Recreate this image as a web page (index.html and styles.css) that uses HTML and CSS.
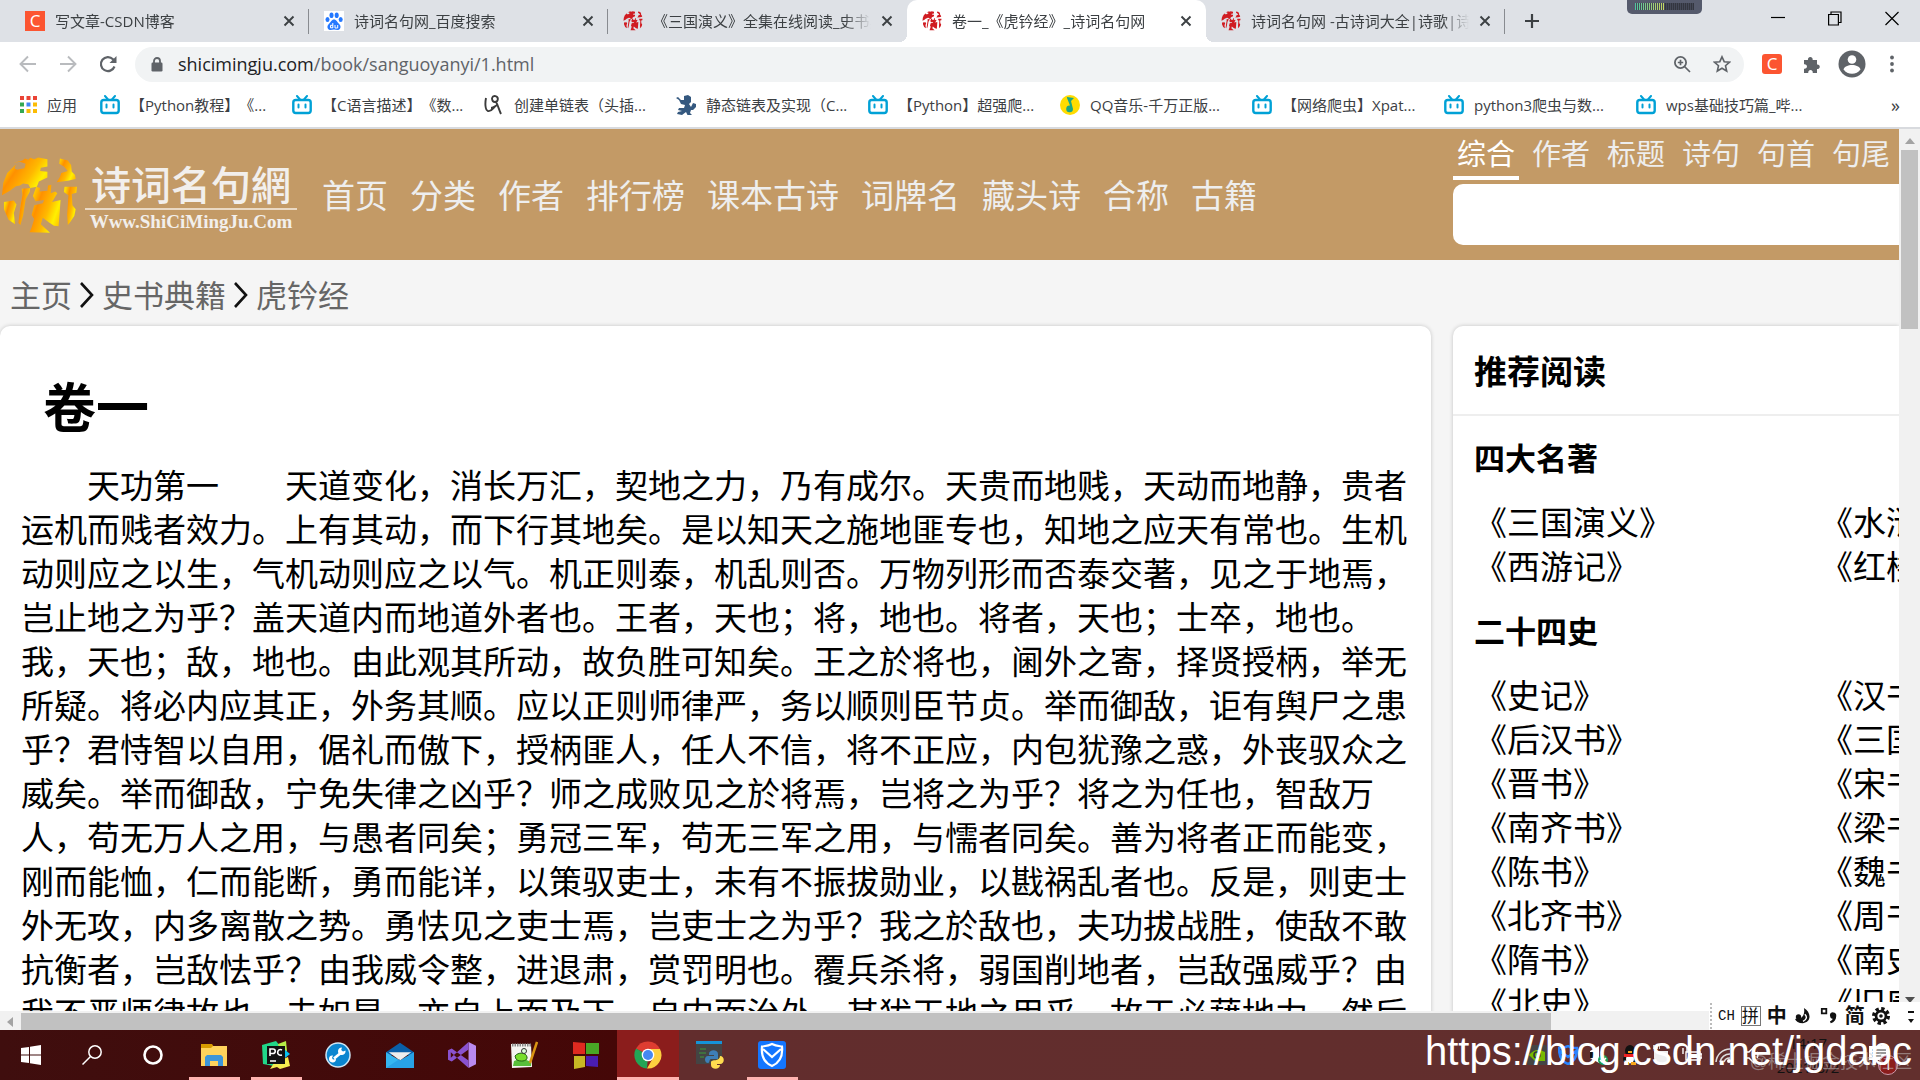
FILE: index.html
```html
<!DOCTYPE html>
<html lang="zh-CN">
<head>
<meta charset="utf-8">
<title>卷一_《虎钤经》_诗词名句网</title>
<link rel="stylesheet" href="styles.css">
</head>
<body>
<svg class="defs" aria-hidden="true">
  <defs>
    <linearGradient id="gold" x1="0" y1="0" x2="0.9" y2="0.5" spreadMethod="reflect">
      <stop offset="0" stop-color="#ffe600"/><stop offset=".15" stop-color="#ffd800"/><stop offset=".42" stop-color="#ff9000"/><stop offset=".75" stop-color="#ffb800"/><stop offset="1" stop-color="#fff000"/>
    </linearGradient>
    <symbol id="seal" viewBox="0 0 240 240">
      <path d="M40 20L68 12L76 6L86 10L92 4L104 8L116 3L144 8V30L124 34L122 44L144 46V64L118 76L112 92L92 96L86 84L70 82L60 88L48 90L30 104L6 118L10 80L22 50L48 24L44 36L52 40L74 36L78 22L60 16Z"/>
      <path d="M182 6L206 12L216 26L218 46L228 56L230 68L206 74L172 78L182 62L186 50L206 44L194 30L180 22Z"/>
      <path d="M12 138L42 134L50 146L42 172L46 206L26 192L12 160Z"/>
      <path d="M66 98L92 96L90 108L78 130L70 180L62 208L56 202L62 150L68 116Z"/>
      <path d="M110 92L122 96L120 106L144 104L146 88L156 86L154 112L168 106L174 112L158 138L184 132L182 162L178 212L164 210L148 200L130 186L124 206L152 232L90 230L96 216L104 190L96 178L104 148L130 142L134 132L108 136L100 120Z"/>
      <path d="M196 92L234 92L232 110L218 114L220 148L230 160L226 180L214 198L206 208L204 176L208 118L194 108Z"/>
    </symbol>
    <symbol id="bili" viewBox="0 0 20 20">
      <path d="M5 1L8 4.500M15 1L12 4.500" stroke="#00a1d6" stroke-width="2" stroke-linecap="round"/>
      <rect x="1.300" y="5" width="17.400" height="13" rx="2.500" fill="#fff" stroke="#00a1d6" stroke-width="2.400"/>
      <path d="M6.500 9.500v3M13.500 9.500v3" stroke="#00a1d6" stroke-width="2" stroke-linecap="round"/>
    </symbol>
    <symbol id="x" viewBox="0 0 12 12"><path d="M1.500 1.500L10.500 10.500M10.500 1.500L1.500 10.500" stroke="#3c4043" stroke-width="1.900"/></symbol>
  </defs>
</svg>

<div class="tabstrip">
  <div class="tab"><span class="fav csdn">C</span><span class="tab-title">写文章-CSDN博客</span><button class="close" aria-label="关闭"><svg><use href="#x"/></svg></button></div>
  <div class="tab"><svg class="fav" viewBox="0 0 20 20"><rect width="20" height="20" fill="#fff"/><g fill="#2478ff"><ellipse cx="3.500" cy="8.500" rx="2" ry="2.600"/><ellipse cx="7.500" cy="4.300" rx="2" ry="2.800"/><ellipse cx="12.700" cy="4.300" rx="2" ry="2.800"/><ellipse cx="16.700" cy="8.500" rx="2" ry="2.600"/><path d="M10 8.500c2.500 0 3 2.500 5.200 4.500 2.400 2.200 1.300 5.700-1.200 6-1.500.1-2.500-.4-4-.4s-2.500.5-4 .4c-2.500-.3-3.600-3.800-1.200-6C7 11 7.500 8.500 10 8.500z"/></g><path d="M8.800 12v5M8.800 14.300H6.500v2.500h2.300M11 14v3h2.700v-3" fill="none" stroke="#fff" stroke-width="1"/></svg><span class="tab-title">诗词名句网_百度搜索</span><button class="close" aria-label="关闭"><svg><use href="#x"/></svg></button></div>
  <div class="tab flush"><svg class="fav red"><use href="#seal"/></svg><span class="tab-title">《三国演义》全集在线阅读_史书典籍</span><button class="close" aria-label="关闭"><svg><use href="#x"/></svg></button></div>
  <div class="tab active"><svg class="fav red"><use href="#seal"/></svg><span class="tab-title">卷一_《虎钤经》_诗词名句网</span><button class="close" aria-label="关闭"><svg><use href="#x"/></svg></button></div>
  <div class="tab"><svg class="fav red"><use href="#seal"/></svg><span class="tab-title">诗词名句网 -古诗词大全|诗歌|诗词</span><button class="close" aria-label="关闭"><svg><use href="#x"/></svg></button></div>
  <button class="newtab" aria-label="新标签页"><svg viewBox="0 0 16 16"><path d="M8 1v14M1 8h14" stroke="#3c4043" stroke-width="2.200"/></svg></button>
  <div class="meter"><i></i></div>
  <div class="winbtns">
    <button aria-label="最小化"><svg viewBox="0 0 14 16"><path d="M0 7.500h14" stroke="#000" stroke-width="1.200"/></svg></button>
    <button aria-label="还原"><svg viewBox="0 0 14 16"><path d="M.6 4.500h9.800v10.500H.6zM3 4.500V2h10v10.500h-2.600" fill="none" stroke="#000" stroke-width="1.200"/></svg></button>
    <button aria-label="关闭窗口"><svg viewBox="0 0 14 16"><path d="M.5 2L13.500 15M13.500 2L.5 15" stroke="#000" stroke-width="1.200"/></svg></button>
  </div>
</div>

<div class="toolbar">
  <button aria-label="后退"><svg viewBox="0 0 18 18"><path d="M17 9H2M9 1.500L1.500 9L9 16.500" fill="none" stroke="#b9bbbe" stroke-width="1.900"/></svg></button>
  <button aria-label="前进"><svg viewBox="0 0 18 18"><path d="M1 9h15M9 1.500L16.500 9L9 16.500" fill="none" stroke="#b9bbbe" stroke-width="1.900"/></svg></button>
  <button aria-label="刷新"><svg viewBox="0 0 18 18"><path d="M15.500 11.500A7 7 0 1 1 14 4.200L16 6.200" fill="none" stroke="#5f6368" stroke-width="2.200"/><path d="M17.500 1v7h-7z" fill="#5f6368"/></svg></button>
  <div class="omnibox">
    <svg class="lock" viewBox="0 0 12 15"><path d="M3 6V4a3 3 0 0 1 6 0v2" fill="none" stroke="#5f6368" stroke-width="1.800"/><rect x=".5" y="5.500" width="11" height="9" rx="1.200" fill="#5f6368"/></svg>
    <span class="url"><b>shicimingju.com</b>/book/sanguoyanyi/1.html</span>
    <button aria-label="缩放"><svg viewBox="0 0 18 18"><circle cx="7.500" cy="7.500" r="5.600" fill="none" stroke="#5f6368" stroke-width="1.800"/><path d="M11.500 11.500L17 17M4.800 7.500h5.400M7.500 4.800v5.400" stroke="#5f6368" stroke-width="1.700"/></svg></button>
    <button aria-label="收藏"><svg viewBox="0 0 18 18"><path d="M9 1.800l2.200 4.900 5.300.5-4 3.500 1.200 5.300L9 13.200 4.300 16l1.200-5.300-4-3.500 5.300-.5z" fill="none" stroke="#5f6368" stroke-width="1.600"/></svg></button>
  </div>
  <span class="ext csdn">C</span>
  <button class="puzzle" aria-label="扩展程序"><svg viewBox="0 0 18 18"><path d="M1 5h4a2.400 2.400 0 1 1 4.600 0H14v4.500a2.300 2.300 0 1 1 0 4.500v4H9.700a2.300 2.300 0 1 0-4.400 0H1v-4.300a2.300 2.300 0 1 0 0-4.400z" fill="#5f6368"/></svg></button>
  <button class="avatar" aria-label="用户"><svg viewBox="0 0 28 28"><circle cx="14" cy="14" r="13.500" fill="#5f6368"/><circle cx="14" cy="9.500" r="4.300" fill="#fff"/><path d="M5.500 19.500c1.500-6 15.500-6 17 0a10.500 10.500 0 0 1-17 0z" fill="#fff"/></svg></button>
  <button class="dots" aria-label="菜单"><svg viewBox="0 0 6 18"><g fill="#5f6368"><circle cx="3" cy="2.500" r="1.900"/><circle cx="3" cy="9" r="1.900"/><circle cx="3" cy="15.500" r="1.900"/></g></svg></button>
</div>

<nav class="bookmarks">
  <a class="apps" href="#"><svg viewBox="0 0 17 17"><g fill="#ea4335"><path d="M0 0h4v4H0zM6.500 0h4v4h-4zM13 0h4v4h-4z"/></g><path fill="#34a853" d="M0 6.500h4v4H0zM0 13h4v4H0z"/><path fill="#4285f4" d="M6.500 6.500h4v4h-4z"/><path fill="#fbbc05" d="M13 6.500h4v4h-4zM6.500 13h4v4h-4zM13 13h4v4h-4z"/></svg>应用</a>
  <a href="#"><svg><use href="#bili"/></svg>【Python教程】《...</a>
  <a href="#"><svg><use href="#bili"/></svg>【C语言描述】《数...</a>
  <a href="#"><svg viewBox="0 0 20 20"><path d="M2 3c-1 5-1 12 2 13 4 1 5-4 9-6M8 3a3 3 0 1 1 3 4c-2 0-3-1-3-4M12 7c2 3 3 8 5 12M13 10c-3 2-4 3-6 3" fill="none" stroke="#3b3b3b" stroke-width="1.900"/></svg>创建单链表（头插...</a>
  <a href="#"><svg viewBox="0 0 20 20"><path d="M8 1l4-1 3 2v5l-2 2 2 3 2-4 3 1v3l-3 3-2 0-1 3 2 2-4 1-2-4-4 3-5-1 1-2 4-1-4-1 1-2 5 0 1-3-4-1-2-4-3-2 2-1 3 3 3 0z" fill="#34587f"/></svg>静态链表及实现（C...</a>
  <a href="#"><svg><use href="#bili"/></svg>【Python】超强爬...</a>
  <a href="#"><svg viewBox="0 0 20 20"><circle cx="10" cy="10" r="10" fill="#ffdc00"/><path d="M7 2l7 1-3 3 2 8a3.400 3.400 0 1 1-3-3.500L7 3z" fill="#1ba784"/></svg>QQ音乐-千万正版...</a>
  <a href="#"><svg><use href="#bili"/></svg>【网络爬虫】Xpat...</a>
  <a href="#"><svg><use href="#bili"/></svg>python3爬虫与数...</a>
  <a href="#"><svg><use href="#bili"/></svg>wps基础技巧篇_哔...</a>
  <button class="more" aria-label="更多书签">»</button>
</nav>

<div class="viewport">
  <div class="page">
    <header class="site-head">
      <a class="logo" href="#">
        <svg viewBox="0 0 240 240" fill="url(#gold)"><use href="#seal"/></svg>
        <span class="logo-text"><span class="logo-cn">诗词名句網</span><span class="logo-en">Www.ShiCiMingJu.Com</span></span>
      </a>
      <nav class="main-nav"><a href="#">首页</a><a href="#">分类</a><a href="#">作者</a><a href="#">排行榜</a><a href="#">课本古诗</a><a href="#">词牌名</a><a href="#">藏头诗</a><a href="#">合称</a><a href="#">古籍</a></nav>
      <form class="search">
        <div class="search-tabs"><a class="on" href="#">综合</a><a href="#">作者</a><a href="#">标题</a><a href="#">诗句</a><a href="#">句首</a><a href="#">句尾</a></div>
        <input type="text" aria-label="搜索">
      </form>
    </header>
    <nav class="crumbs"><a href="#">主页</a><svg viewBox="0 0 16 28"><path d="M2 2L13 14L2 26" fill="none" stroke="#111" stroke-width="2.600"/></svg><a href="#">史书典籍</a><svg viewBox="0 0 16 28"><path d="M2 2L13 14L2 26" fill="none" stroke="#111" stroke-width="2.600"/></svg><a href="#">虎钤经</a></nav>
    <div class="columns">
      <main class="card article">
        <h1>卷一</h1>
        <p>天功第一　　天道变化，消长万汇，契地之力，乃有成尔。天贵而地贱，天动而地静，贵者运机而贱者效力。上有其动，而下行其地矣。是以知天之施地匪专也，知地之应天有常也。生机动则应之以生，气机动则应之以气。机正则泰，机乱则否。万物列形而否泰交著，见之于地焉，岂止地之为乎？盖天道内而地道外者也。王者，天也；将，地也。将者，天也；士卒，地也。我，天也；敌，地也。由此观其所动，故负胜可知矣。王之於将也，阃外之寄，择贤授柄，举无所疑。将必内应其正，外务其顺。应以正则师律严，务以顺则臣节贞。举而御敌，讵有舆尸之患乎？君恃智以自用，倨礼而傲下，授柄匪人，任人不信，将不正应，内包犹豫之惑，外丧驭众之威矣。举而御敌，宁免失律之凶乎？师之成败见之於将焉，岂将之为乎？将之为任也，智敌万人，苟无万人之用，与愚者同矣；勇冠三军，苟无三军之用，与懦者同矣。善为将者正而能变，刚而能恤，仁而能断，勇而能详，以策驭吏士，未有不振拔勋业，以戡祸乱者也。反是，则吏士外无攻，内多离散之势。勇怯见之吏士焉，岂吏士之为乎？我之於敌也，夫功拔战胜，使敌不敢抗衡者，岂敌怯乎？由我威令整，进退肃，赏罚明也。覆兵杀将，弱国削地者，岂敌强威乎？由我不严师律故也。夫如是，亦自上而及下，自内而治外，其犹天地之用乎，故天必藉地力，然后</p>
      </main>
      <aside class="card side">
        <h2>推荐阅读</h2>
        <h3>四大名著</h3>
        <ul><li><a href="#">《三国演义》</a></li><li><a href="#">《水浒传》</a></li><li><a href="#">《西游记》</a></li><li><a href="#">《红楼梦》</a></li></ul>
        <h3>二十四史</h3>
        <ul><li><a href="#">《史记》</a></li><li><a href="#">《汉书》</a></li><li><a href="#">《后汉书》</a></li><li><a href="#">《三国志》</a></li><li><a href="#">《晋书》</a></li><li><a href="#">《宋书》</a></li><li><a href="#">《南齐书》</a></li><li><a href="#">《梁书》</a></li><li><a href="#">《陈书》</a></li><li><a href="#">《魏书》</a></li><li><a href="#">《北齐书》</a></li><li><a href="#">《周书》</a></li><li><a href="#">《隋书》</a></li><li><a href="#">《南史》</a></li><li><a href="#">《北史》</a></li><li><a href="#">《旧唐书》</a></li></ul>
      </aside>
    </div>
  </div>
  <div class="vbar"><svg viewBox="0 0 10 6"><path d="M0 6L5 0L10 6z" fill="#a3a3a3"/></svg><i></i><svg class="down" viewBox="0 0 10 6"><path d="M0 0h10L5 6z" fill="#505050"/></svg></div>
  <div class="hbar"><svg viewBox="0 0 6 10"><path d="M6 0v10L0 5z" fill="#a3a3a3"/></svg><i></i></div>
  <div class="ime">
    <span class="grip"></span><span class="ch">CH</span><span class="pin">拼</span><b>中</b>
    <svg viewBox="0 0 20 20"><path d="M11 1c8 4 9 16-1 17-5 0-8-2-9-5 6 2 12-3 10-12z" fill="#111"/><circle cx="5" cy="11" r="3" fill="#111"/><path d="M12 8c3 3 2 6-2 8" stroke="#fff" stroke-width="1.600" fill="none"/></svg>
    <svg viewBox="0 0 20 20"><path d="M2 2h5v5H2z" fill="none" stroke="#111" stroke-width="2"/><path d="M11 9a3.500 3.500 0 1 1 7 1c0 4-2 7-6 8l-1-2c2-1 3-2 3-3-2 0-3-2-3-4z" fill="#111"/></svg>
    <b>简</b>
    <svg viewBox="0 0 20 20"><circle cx="10" cy="10" r="8" fill="none" stroke="#111" stroke-width="4" stroke-dasharray="3.600 2.680"/><circle cx="10" cy="10" r="5.500" fill="none" stroke="#111" stroke-width="3"/><circle cx="10" cy="10" r="2" fill="#111"/></svg>
    <svg class="last" viewBox="0 0 8 16"><path d="M1 3h6v2H1zM1 11h6L4 15z" fill="#111"/></svg>
  </div>
</div>

<footer class="taskbar">
  <button aria-label="开始"><svg viewBox="0 0 20 20"><path d="M0 3l8-1v7.500H0zM9 1.800L20 0v9.500H9zM0 10.500h8V18l-8-1zM9 10.500h11V20L9 18.200z" fill="#fff"/></svg></button>
  <button aria-label="搜索"><svg viewBox="0 0 20 20"><circle cx="13" cy="7" r="6.200" fill="none" stroke="#fff" stroke-width="1.500"/><path d="M8.500 11.500L.5 19.500" stroke="#fff" stroke-width="1.500"/></svg></button>
  <button aria-label="Cortana"><svg viewBox="0 0 20 20"><circle cx="10" cy="10" r="8.500" fill="none" stroke="#fff" stroke-width="2.600"/></svg></button>
  <button class="run" aria-label="文件资源管理器"><svg viewBox="0 0 28 28"><path d="M1 3h11l2 3v6H1z" fill="#d99a00"/><path d="M1 7h10l2-2h14v20H1z" fill="#ffd35c"/><path d="M5 25v-9l2-2h14l2 2v9h-5v-5h-8v5z" fill="#3d96d9"/></svg></button>
  <button class="run" aria-label="PyCharm"><svg viewBox="0 0 28 28"><path d="M0 4L14 0l4 5-6 20L1 23z" fill="#21d789"/><path d="M16 3l8-3 1 10-6 4z" fill="#b6ee47"/><path d="M22 8l6 5-5 4z" fill="#07c3f2"/><path d="M8 28l4-6 14-6 2 9-10 3-3-2z" fill="#f5ee4f"/><rect x="5" y="5" width="18" height="18" fill="#111"/><path d="M8 15V8h3a2 2 0 0 1 0 4.500H8M20 9c-5-2.500-6.500 6.500 0 5M8 20h6" fill="none" stroke="#fff" stroke-width="1.600"/></svg></button>
  <button aria-label="工具"><svg viewBox="0 0 28 28"><circle cx="14" cy="14" r="12" fill="#0b86d0" stroke="#cfe6f5" stroke-width="1.500"/><path d="M10 17.500L18 11" stroke="#fff" stroke-width="2.800"/><path d="M12 18a3.500 3.500 0 1 1-3-3.500L8 17l1 1.500z" fill="#fff"/><path d="M21.500 9.500a3.800 3.800 0 1 1-3.500-3l-.8 2.600 1.800 1.400z" fill="#fff"/></svg></button>
  <button aria-label="邮件"><svg viewBox="0 0 30 28"><path d="M0 11L15 1l15 10v3H0z" fill="#0a5fa8"/><path d="M0 11l15 9 15-9v17H0z" fill="#35b6f0"/><path d="M3 11h24L15 20z" fill="#eee"/><path d="M0 28L15 18v2l15-9v17z" fill="#1f95e0" opacity=".6"/></svg></button>
  <button aria-label="Visual Studio"><svg viewBox="0 0 30 28"><path d="M22 0l8 4v20l-8 4z" fill="#b98af0"/><path d="M22 0v8L4 21l-4-2V9l4-2 18 13v8L3 11v6L22 0z" fill="#8a52cf" fill-rule="evenodd"/></svg></button>
  <button aria-label="Notepad++"><svg viewBox="0 0 28 28"><path d="M1 3h20l1 23-20 1z" fill="#f4f4f0"/><path d="M2 4h19" stroke="#888" stroke-width="3" stroke-dasharray="1.500 1"/><path d="M3 25l1-5 8-3 9 4v4z" fill="#58bf3a"/><path d="M5 15c3-4 11-4 12 1s-9 5-11 2z" fill="#78df2c" stroke="#226018"/><circle cx="14" cy="10" r="2.500" fill="#dfd" stroke="#333"/><path d="M27 1L20 22" stroke="#d99412" stroke-width="2.500"/></svg></button>
  <button aria-label="应用"><svg viewBox="0 0 28 28"><path d="M1 1l12 1v11H1z" fill="#e02a20"/><path d="M14 2h13v11H14z" fill="#49a626"/><path d="M2 15h11v11l-11 2z" fill="#c8b824"/><path d="M14 15h12v11l-12-1z" fill="#4a1db0"/></svg></button>
  <button class="run current" aria-label="Chrome"><svg viewBox="0 0 28 28"><path d="M14 14L2 7.500A13.500 13.500 0 0 1 26 8z" fill="#de3d31"/><path d="M14 14l-1 13.500A13.500 13.500 0 0 1 2 7.500z" fill="#23a455"/><path d="M14 8h12a13.500 13.500 0 0 1-13 19.500L19 17z" fill="#fdcf3f"/><circle cx="14" cy="14" r="6.300" fill="#fff"/><circle cx="14" cy="14" r="5" fill="#4688f1"/></svg></button>
  <button aria-label="Python"><svg viewBox="0 0 28 28"><path d="M0 1h26v22H0z" fill="#444"/><path d="M0 0h26v3H0z" fill="#1593d8"/><path d="M4 8h6M3 12h7M4 16h4" stroke="#3c9b38"/><path d="M13 13c0-5 9-5 9 0v5h-7c-2 0-1 4-3 4-4 0-4-7 0-7h6v-1h-5z" fill="#3d7fb8"/><path d="M24 15c5 0 5 8 0 8h-3v1h3c0 5-9 5-9 0v-3c0-3 9 0 9-6z" fill="#ffdc4f"/></svg></button>
  <button class="run" aria-label="电脑管家"><svg viewBox="0 0 28 28"><rect width="28" height="28" rx="3" fill="#1476ff"/><path d="M14 3c4 2 7 2 10 2.500C25 15 21 22 14 25 7 22 3 15 4 5.500 7 5 10 5 14 3zM5 8l9 8 9-8" fill="none" stroke="#fff" stroke-width="2.200"/></svg></button>
  <div class="tray">
    <svg viewBox="0 0 20 20"><rect width="20" height="20" rx="2" fill="#444"/><path d="M2 10c5-6 10-6 16-3v9H8z" fill="#76b900"/><circle cx="10" cy="10" r="3" fill="none" stroke="#333" stroke-width="1.500"/></svg>
    <svg viewBox="0 0 20 20"><path d="M10 1c3 2 6 2 9 2 0 8-3 14-9 16C4 17 1 11 1 3c3 0 6 0 9-2zM2 6l8 6 8-6" fill="none" stroke="#2a83ff" stroke-width="2.500"/></svg>
    <svg viewBox="0 0 20 20"><path d="M1 6l9-5v17l-9-5z" fill="#fff"/><path d="M1 7h4v6H1z" fill="#111"/><circle cx="14" cy="15" r="5" fill="#18a05a"/><path d="M11 15l2 2 4-4" fill="none" stroke="#fff" stroke-width="1.500"/></svg>
    <svg viewBox="0 0 20 20"><ellipse cx="10" cy="6" rx="5" ry="6" fill="#111"/><ellipse cx="10" cy="14" rx="7" ry="5" fill="#111"/><ellipse cx="10" cy="14" rx="4" ry="4.500" fill="#fff"/><path d="M4 9h12v3H4z" fill="#e22"/><path d="M4 17h5v3H4zM11 17h5v3h-5zM8 6h4v2H8z" fill="#f9a61a"/></svg>
    <svg viewBox="0 0 20 20"><path d="M3 6h14v7q0 5-7 5t-7-5z" fill="#eee"/><path d="M2 2h7" stroke="#ccc" stroke-width="4" stroke-dasharray="2 1"/></svg>
    <svg viewBox="0 0 20 20"><path d="M4 7h14v8H4zM1 3v6M5 2v5M18 9h2v4h-2" fill="none" stroke="#fff" stroke-width="1.400"/><path d="M6 9h9v4H6z" fill="#fff"/></svg>
    <svg viewBox="0 0 20 20"><path d="M3 17A14 14 0 0 1 17 4M7 17A10 10 0 0 1 17 9M11 17a6 6 0 0 1 6-4" fill="none" stroke="#ddd" stroke-width="1.600"/><circle cx="16" cy="16" r="2" fill="#fff"/></svg>
    <svg viewBox="0 0 20 20"><path d="M1 7h4l5-5v16l-5-5H1zM13 7q2 3 0 6" fill="none" stroke="#fff" stroke-width="1.400"/></svg>
    <div class="clock"><span>14:17</span><span>2021/8/2</span></div>
    <div class="notice"><svg viewBox="0 0 20 20"><path d="M0 1h20v14H9l-3 4v-4H0z" fill="#fff"/><path d="M3 5h14M3 8h14M3 11h9" stroke="#333"/></svg><span class="badge">1</span></div>
  </div>
  <span class="mark small">@稀土掘金技术社区</span>
  <span class="mark">https://blog.csdn.net/jgdabc</span>
</footer>
</body>
</html>
```
FILE: styles.css
```css
* { box-sizing: border-box; }
html, body { height: 100%; }
body {
  margin: 0;
  display: flex;
  flex-direction: column;
  overflow: hidden;
  font-family: "Open Sans", "Noto Sans CJK SC", sans-serif;
  font-size: 15px;
  color: #3c4043;
  background: #fff;
  text-spacing-trim: space-all;
}
.defs { position: absolute; width: 0; height: 0; }
a { color: inherit; text-decoration: none; }
button { border: 0; padding: 0; background: none; font: inherit; color: inherit; display: flex; align-items: center; justify-content: center; }
svg { display: block; flex: none; }

/* browser tabs */
.tabstrip { display: flex; height: 42px; flex: none; background: #dee1e6; padding-left: 10px; position: relative; }
.tab { flex: 0 1 299px; min-width: 0; display: flex; align-items: center; gap: 10px; padding: 0 14px 0 15px; position: relative; }
.tab::after { content: ""; position: absolute; right: 0; top: 9px; width: 1px; height: 25px; background: #888b90; }
.tab.flush::after { display: none; }
.tab.active { background: #fff; border-radius: 10px 10px 0 0; }
.tab.active::before, .tab.active::after { content: ""; position: absolute; top: auto; bottom: 0; width: 8px; height: 8px; }
.tab.active::before { left: -8px; background: radial-gradient(circle at 0 0, transparent 8px, #fff 8px); }
.tab.active::after { right: -8px; background: radial-gradient(circle at 100% 0, transparent 8px, #fff 8px); }
.fav { width: 20px; height: 20px; }
.csdn { background: #fc5531; color: #fff; font-size: 17px; line-height: 20px; text-align: center; flex: none; }
.red { fill: #d01c22; }
.tab-title { flex: 1; min-width: 0; overflow: hidden; white-space: nowrap; line-height: 22px; mask-image: linear-gradient(90deg, #000 88%, transparent); }
.close svg { width: 12px; height: 12px; }
.newtab { width: 54px; }
.newtab svg { width: 16px; height: 16px; }
.meter { position: absolute; left: 1627px; top: 0; width: 75px; height: 14px; border-radius: 0 0 5px 5px; background: #555a6c; padding: 3px 8px; }
.meter i { display: block; height: 7px; background: repeating-linear-gradient(90deg, transparent 0 1px, #444857 1px 2px), linear-gradient(90deg, #4fc3a0, #c8d860 50%, #33363f 50%); }
.winbtns { margin-left: auto; display: flex; align-items: flex-start; }
.winbtns button { width: 57px; height: 36px; }
.winbtns svg { width: 14px; height: 16px; }

/* address bar */
.toolbar { display: flex; align-items: center; height: 44px; flex: none; padding: 0 8px; }
.toolbar > button { width: 40px; }
.toolbar svg { width: 18px; height: 18px; }
.omnibox { flex: 1; height: 35px; margin: 0 18px 0 7px; border-radius: 18px; background: #f1f3f4; display: flex; align-items: center; padding: 0 13px 0 16px; gap: 22px; }
.omnibox .lock { width: 12px; height: 15px; }
.url { flex: 1; font-size: 18px; line-height: 24px; color: #5f6368; margin-left: -7px; }
.url b { font-weight: 400; color: #202124; }
.toolbar .ext { width: 20px; height: 20px; border-radius: 3px; margin-right: 10px; }
.toolbar .avatar svg { width: 28px; height: 28px; }
.toolbar .dots svg { width: 6px; }

/* bookmarks */
.bookmarks { display: flex; height: 43px; flex: none; padding: 0 20px 4px; border-bottom: 2px solid #d8dade; align-items: center; }
.bookmarks a { flex: 0 1 192px; min-width: 0; display: flex; align-items: center; gap: 10px; white-space: nowrap; line-height: 22px; }
.bookmarks a.apps { flex: 0 0 80px; }
.bookmarks svg { width: 20px; height: 20px; }
.bookmarks .apps svg { width: 17px; height: 17px; }
.more { margin-left: auto; font-size: 18px; }

/* page area with its scrollbars */
.viewport { flex: 1; min-height: 0; display: grid; grid-template-columns: minmax(0, 1fr) 21px; grid-template-rows: minmax(0, 1fr) 19px; position: relative; }
.page { overflow: hidden; background: #f5f5f5; color: #000; }
.vbar { background: #f1f1f1; display: flex; flex-direction: column; align-items: center; padding: 9px 0 8px; }
.vbar svg { width: 10px; height: 6px; }
.vbar i { width: 17px; height: 179px; margin-top: 6px; background: #c1c1c1; }
.vbar .down { margin-top: auto; }
.hbar { grid-column: 1 / 3; background: #f1f1f1; display: flex; align-items: center; padding: 2px 0 0 7px; }
.hbar svg { width: 6px; height: 10px; }
.hbar i { width: 80%; height: 17px; margin-left: 8px; background: #c1c1c1; }

.site-head { display: grid; grid-template-columns: 297px minmax(0, 1fr) 446px; height: 131px; background: #c39a66; }
.logo { display: flex; align-items: center; gap: 6px; color: #f2efec; padding-top: 2px; }
.logo > svg { width: 79px; height: 80px; }
.logo-text { flex: 1; display: flex; flex-direction: column; white-space: nowrap; }
.logo-cn { font-family: "Noto Sans CJK SC", sans-serif; font-size: 40px; line-height: 50px; font-weight: 500; text-align: center; border-bottom: 2px solid #ead9c4; }
.logo-en { font: 700 19px/24px "Liberation Serif", serif; text-align: center; }
.main-nav { display: flex; align-items: center; gap: 22px; padding: 2px 0 0 25px; font-size: 33px; line-height: 44px; color: #eee; white-space: nowrap; }
.search { padding-top: 4px; }
.search-tabs { display: flex; gap: 9px; height: 51px; font-size: 29px; line-height: 42px; color: #eee; white-space: nowrap; }
.search-tabs a { padding: 0 4px; height: 47px; }
.search-tabs .on { color: #fff; border-bottom: 4px solid #fff; }
.search input { display: block; width: 100%; height: 61px; border: 0; border-radius: 10px 0 0 10px; background: #fff; padding: 0 16px; font-size: 29px; }

.crumbs { display: flex; align-items: center; height: 66px; padding: 4px 10px 0; gap: 7px; font-size: 31px; line-height: 44px; color: #666; }
.crumbs svg { width: 16px; height: 28px; }

.columns { display: grid; grid-template-columns: minmax(0, 1fr) 446px; gap: 22px; }
.card { background: #fff; border-radius: 10px; box-shadow: 0 0 4px rgba(0, 0, 0, .2); }
.article { padding: 46px 22px 44px 21px; height: max-content; }
h1, h2, h3, p, ul { margin: 0; padding: 0; }
h1 { font-size: 53px; line-height: 72px; padding-left: 22px; }
.article p { margin-top: 20px; font-size: 33px; line-height: 44px; text-indent: 2em; }
.side { border-radius: 10px 0 0 10px; overflow: hidden; }
.side h2 { font-size: 33px; line-height: 84px; padding: 4px 0 0 21px; border-bottom: 2px solid #eee; }
.side h3 { font-size: 31px; line-height: 44px; padding-left: 21px; margin: 20px 0 21px; }
.side ul { list-style: none; display: grid; grid-template-columns: 346px 346px; padding-left: 21px; font-size: 33px; line-height: 44px; }

/* input method bar floats over the page */
.ime { position: absolute; right: 0; bottom: 0; width: 211px; height: 28px; background: #fff; color: #111; display: flex; align-items: center; gap: 6px; padding-left: 1px; white-space: nowrap; }
.ime svg { width: 20px; height: 18px; }
.ime b { font-size: 20px; line-height: 24px; }
.ime .grip { height: 26px; border-left: 2px dotted #bbb; }
.ime .ch { font: 14px/20px "Liberation Mono", monospace; }
.ime .pin { border: 1px solid #777; width: 20px; font-size: 17px; line-height: 18px; }
.ime .last { width: 8px; height: 16px; margin-left: auto; margin-right: 5px; }

/* taskbar */
.taskbar { flex: none; height: 50px; display: flex; position: relative; background: linear-gradient(90deg, #3f0e0e, #450707 618px, #622d2d 676px, #622f2d); color: #fff; }
.taskbar > button { width: 62px; position: relative; }
.taskbar > button:nth-child(-n+3) { width: 61px; }
.taskbar > button > svg { width: 28px; height: 28px; }
.taskbar > button:nth-child(-n+3) > svg { width: 20px; height: 20px; }
.taskbar .run::after { content: ""; position: absolute; left: 6px; right: 5px; bottom: 0; height: 3px; background: #ffb3b0; }
.taskbar .current { background: #8b1d1c; }
.taskbar .current::after { left: 0; right: 0; }
.tray { margin-left: auto; display: flex; align-items: center; gap: 11px; padding-right: 31px; }
.tray > svg { width: 20px; height: 20px; }
.clock { display: flex; flex-direction: column; align-items: center; font-size: 15px; line-height: 24px; color: #111; width: 88px; margin: 0 6px 0 -11px; }
.notice { position: relative; }
.notice svg { width: 20px; height: 20px; }
.badge { position: absolute; left: 9px; top: 10px; width: 20px; height: 20px; border-radius: 50%; background: #8b1d1c; border: 1px solid #c9a; font-size: 14px; line-height: 18px; text-align: center; }
.mark { position: absolute; right: 8px; top: 1px; font: 40px/40px "Liberation Sans", "Noto Sans CJK SC", sans-serif; color: #fff; white-space: nowrap; }
.mark.small { font-size: 18px; top: 12px; color: rgba(200, 200, 200, .5); }
```
